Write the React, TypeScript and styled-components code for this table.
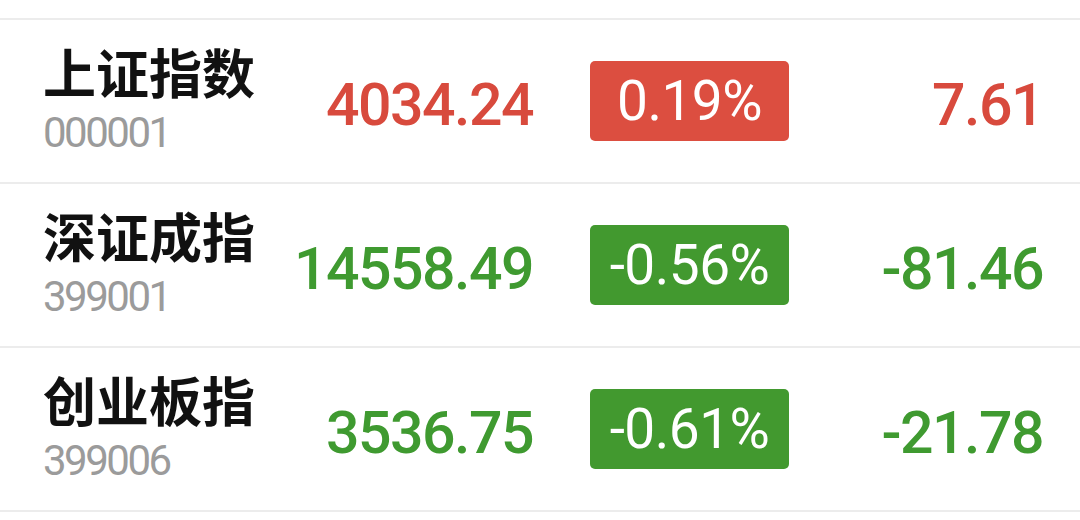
import React from "react";
import styled, { createGlobalStyle } from "styled-components";

const Global = createGlobalStyle`
  html, body { margin: 0; padding: 0; background: #ffffff; }
  body { font-family: Roboto, "Noto Sans CJK SC", sans-serif; }
`;

const List = styled.div`
  width: 1080px;
  padding-top: 18px;
`;

const Row = styled.div`
  display: grid;
  grid-template-columns: 247px 243px 256px 251px;
  align-items: center;
  height: 162px;
  padding: 0 40px 0 43px;
  border-top: 2px solid #ececec;
  &:last-child { border-bottom: 2px solid #ececec; }
`;

const NameBlock = styled.div`
  display: flex;
  flex-direction: column;
  margin-top: -6px;
`;

const Name = styled.div`
  font-family: "Noto Sans CJK SC", sans-serif;
  font-weight: 700;
  font-size: 53px;
  line-height: 60px;
  color: #111111;
`;

const Code = styled.div`
  font-family: Roboto, sans-serif;
  font-weight: 400;
  font-size: 42px;
  line-height: 44px;
  margin-top: 10px;
  color: #9b9b9b;
  letter-spacing: -2.5px;
`;

const Value = styled.div<{ $up: boolean }>`
  text-align: right;
  font-family: Roboto, sans-serif;
  font-weight: 500;
  font-size: 59px;
  line-height: 64px;
  letter-spacing: -1.5px;
  color: ${(p) => (p.$up ? "#d84a3d" : "#3f9a30")};
  margin-top: 8px;
`;

const Change = styled(Value)`
  margin-right: -3px;
`;

const BadgeCell = styled.div`
  display: flex;
  justify-content: flex-end;
`;

const Badge = styled.div<{ $up: boolean }>`
  width: 199px;
  height: 80px;
  border-radius: 5px;
  background: ${(p) => (p.$up ? "#dc4e40" : "#42992f")};
  color: #ffffff;
  display: flex;
  align-items: center;
  justify-content: center;
  font-family: Roboto, sans-serif;
  font-weight: 400;
  font-size: 55px;
  letter-spacing: -0.5px;
`;

const data = [
  { name: "上证指数", code: "000001", price: "4034.24", pct: "0.19%", chg: "7.61", up: true },
  { name: "深证成指", code: "399001", price: "14558.49", pct: "-0.56%", chg: "-81.46", up: false },
  { name: "创业板指", code: "399006", price: "3536.75", pct: "-0.61%", chg: "-21.78", up: false },
];

export default function App() {
  return (
    <>
      <Global />
      <List>
        {data.map((d) => (
          <Row key={d.code}>
            <NameBlock>
              <Name>{d.name}</Name>
              <Code>{d.code}</Code>
            </NameBlock>
            <Value $up={d.up}>{d.price}</Value>
            <BadgeCell>
              <Badge $up={d.up}>{d.pct}</Badge>
            </BadgeCell>
            <Change $up={d.up}>{d.chg}</Change>
          </Row>
        ))}
      </List>
    </>
  );
}
